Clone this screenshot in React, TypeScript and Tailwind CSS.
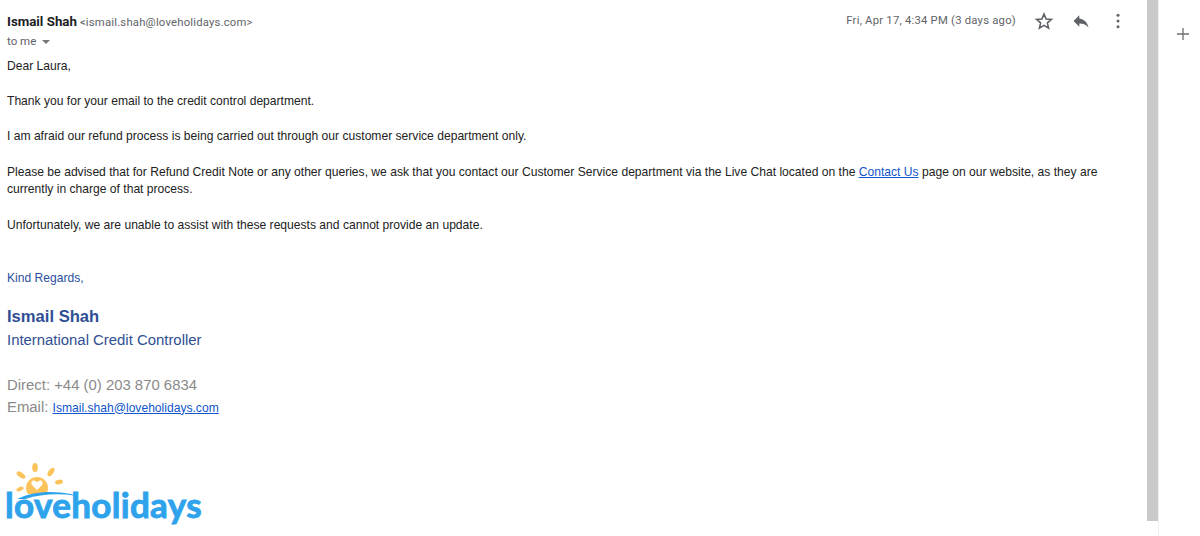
const Star = () => (
  <svg width="20" height="20" viewBox="0 0 24 24" fill="none" stroke="#5f6368" strokeWidth="1.9" strokeLinejoin="miter">
    <path d="M12 3.6l2.5 5.9 6.4.55-4.85 4.2 1.45 6.25L12 17.2l-5.5 3.3 1.45-6.25L3.1 10.05l6.4-.55z" />
  </svg>
);

const Reply = () => (
  <svg width="20" height="20" viewBox="0 0 24 24" fill="#5f6368">
    <path d="M10 9V5l-7 7 7 7v-4.1c5 0 8.5 1.6 11 5.1-1-5-4-10-11-11z" />
  </svg>
);

const More = () => (
  <svg width="20" height="20" viewBox="0 0 24 24" fill="#5f6368">
    <circle cx="12" cy="5" r="1.8" />
    <circle cx="12" cy="12" r="1.8" />
    <circle cx="12" cy="19" r="1.8" />
  </svg>
);

const Sun = () => (
  <svg width="72" height="36" viewBox="0 0 72 36" className="block">
    <g fill="#fbc35a">
      <ellipse cx="28" cy="4.500" rx="2.800" ry="4.500" />
      <ellipse cx="44" cy="9" rx="2.500" ry="4.800" transform="rotate(35 44 9)" />
      <ellipse cx="52" cy="19" rx="2.300" ry="4" transform="rotate(78 52 19)" />
      <ellipse cx="14" cy="12" rx="2.500" ry="5" transform="rotate(-55 14 12)" />
      <ellipse cx="13" cy="26" rx="2" ry="3.800" transform="rotate(65 13 26)" />
      <path
        fillRule="evenodd"
        d="M30 14a11 11 0 0 1 11 11c0 2.500-.8 4.500-2 6H21c-1.200-1.500-2-3.500-2-6a11 11 0 0 1 11-11zm0 13l5-5c1.300-1.700.5-4.500-1.800-4.500-1.700 0-2.500 1-3.200 2.200-.7-1.200-1.500-2.200-3.200-2.200-2.300 0-3.100 2.800-1.800 4.500z"
      />
    </g>
    <path d="M10 36c14-7 34-9 54-5 2 .5 3 1 3 1.500-19-2.500-38-1-54 5.500z" fill="#2ea3ec" />
  </svg>
);

export default function App() {
  return (
    <div className="flex h-[536px] w-[1200px] overflow-hidden bg-white font-['Liberation_Sans',Arial,sans-serif]">
      <main className="w-[1147px] pl-[7px]">
        <header className="flex h-[49px] items-start justify-between">
          <div className="pt-[14px]">
            <div className="flex items-baseline gap-[3px] leading-[16px]">
              <span className="font-['Roboto',sans-serif] text-[13.300px] font-bold text-[#202124]">Ismail Shah</span>
              <span className="font-['Roboto',sans-serif] text-[11.300px] tracking-[0.2px] text-[#5f6368]">&lt;ismail.shah@loveholidays.com&gt;</span>
            </div>
            <div className="mt-[2px] flex items-center gap-[6px] font-['Roboto',sans-serif] text-[11.500px] leading-[16px] text-[#5f6368]">
              to me
              <span className="mt-[1px] h-0 w-0 border-x-[4px] border-t-[4px] border-x-transparent border-t-[#777]" />
            </div>
          </div>
          <div className="flex items-center pt-[11px]">
            <span className="mr-[18px] font-['Roboto',sans-serif] text-[11.300px] leading-[20px] tracking-[0.22px] text-[#5f6368]">Fri, Apr 17, 4:34 PM (3 days ago)</span>
            <span className="mr-[17px]"><Star /></span>
            <span className="mr-[17px]"><Reply /></span>
            <span className="mr-[19px]"><More /></span>
          </div>
        </header>

        <div className="text-[12.100px] leading-[17.650px] text-[#222]">
          <p className="mt-[8.800px]">Dear Laura,</p>
          <p className="mt-[17.650px]">Thank you for your email to the credit control department.</p>
          <p className="mt-[17.650px]">I am afraid our refund process is being carried out through our customer service department only.</p>
          <p className="mt-[17.650px] w-[1100px]">
            Please be advised that for Refund Credit Note or any other queries, we ask that you contact our Customer Service department via the Live Chat located on the{" "}
            <a className="text-[#1155cc] underline">Contact Us</a> page on our website, as they are currently in charge of that process.
          </p>
          <p className="mt-[17.650px]">Unfortunately, we are unable to assist with these requests and cannot provide an update.</p>
        </div>

        <p className="mt-[35.500px] text-[12.100px] leading-[17.700px] text-[#2a4f9e]">Kind Regards,</p>
        <div className="mt-[17px] text-[#2f4f94]">
          <p className="text-[16.600px] leading-[24px] font-bold">Ismail Shah</p>
          <p className="text-[14.900px] leading-[23px]">International Credit Controller</p>
        </div>
        <div className="mt-[22px] text-[14.900px] leading-[22px] text-[#8a8a8a]">
          <p>Direct: +44 (0) 203 870 6834</p>
          <p>
            Email: <a className="text-[12.100px] text-[#1155cc] underline">Ismail.shah@loveholidays.com</a>
          </p>
        </div>
        <div className="mt-[44px]">
          <Sun />
          <p className="-mt-[13px] -ml-[2px] font-['Lato',sans-serif] text-[35px] leading-[36px] font-bold tracking-[0.33px] text-[#2ea3ec] [-webkit-text-stroke:0.9px_#2ea3ec]">loveholidays</p>
        </div>
      </main>
      <div className="h-[521px] w-[11px] bg-[#c9c9c9]" />
      <aside className="flex-1 border-l border-[#efefef]">
        <div className="flex justify-center pt-[27px] pl-[7px]">
          <svg width="14" height="14" viewBox="0 0 14 14" stroke="#6f6f6f" strokeWidth="1.3">
            <path d="M7 1v12M1 7h12" />
          </svg>
        </div>
      </aside>
    </div>
  );
}
